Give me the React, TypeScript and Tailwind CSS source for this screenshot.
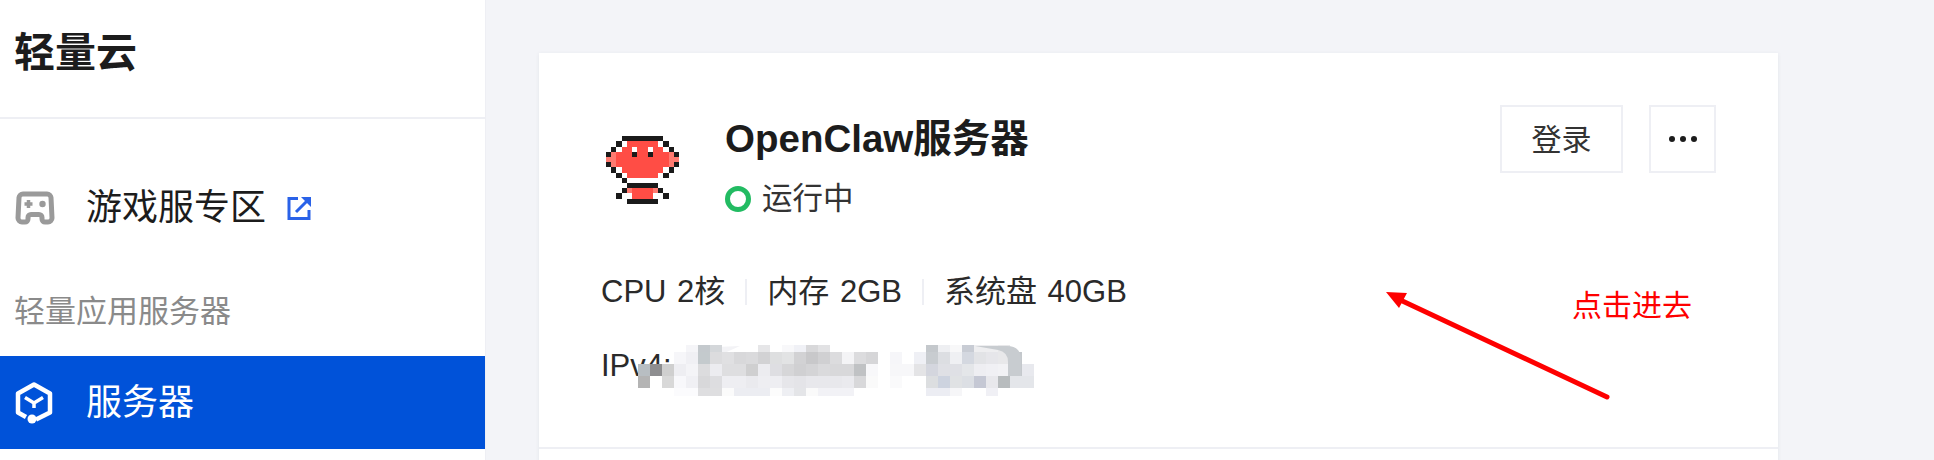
const LOGO = [
  "...kkkkkkkk...",
  "..kwrrrrrrwk..",
  ".kwrrwrrwrrwk.",
  "kprrrkrrkrrrpk",
  "pprrrrrrrrrrpp",
  "kprrrrrrrrrrpk",
  ".kwrrrrrrrrwk.",
  "..kwrrrrrrwk..",
  "...k..........",
  "....kkkkkk....",
  "...kprrrrpk...",
  "..k..rrrr..k..",
  "....kkkkkk....",
];

const LOGO_COLORS: Record<string, string> = {
  k: "#1a1a1a",
  r: "#ff4d45",
  p: "#ff7a70",
  w: "#ffffff",
};

// mosaic that hides the address: [column, colour], one list per row
const MOSAIC_ROWS: { y: number; h: number; cells: [number, string][] }[] = [
  {
    y: 345,
    h: 7,
    cells: [
      [4, "#f5f5f8"], [5, "#c4c9cd"], [6, "#d4d7da"], [10, "#e6e6e8"], [12, "#f8f8fa"],
      [13, "#f0f1f6"], [14, "#d8d8da"], [15, "#e2e2e4"], [24, "#c4c8cc"], [25, "#eeeff2"],
      [26, "#f8f8f9"], [27, "#c8ccd4"], [28, "#eeeef0"], [29, "#eeeef0"], [30, "#e8e8ea"],
    ],
  },
  {
    y: 352,
    h: 12,
    cells: [
      [3, "#f6f6f9"], [4, "#f0f0f4"], [5, "#c4cacd"], [6, "#dcdcde"], [7, "#e0e0e2"], [8, "#d8d8da"],
      [9, "#dadadc"], [10, "#d2d2d4"], [11, "#dedfe0"], [12, "#e2e3e4"], [13, "#d2d2d4"], [14, "#c8c8ca"],
      [15, "#d0d0d2"], [16, "#dcdcde"], [17, "#f4f4f6"], [18, "#dcdcde"], [19, "#d6d6d8"], [21, "#f6f6f9"],
      [23, "#eff0f5"], [24, "#c8ccd0"], [25, "#dcdee2"], [26, "#eff0f3"], [27, "#d4d8e0"], [28, "#e2e3e6"],
      [29, "#e6e6ea"], [30, "#e8e8ea"], [31, "#c4c8cc"],
    ],
  },
  {
    y: 364,
    h: 12,
    cells: [
      [0, "#b8bec2"], [1, "#8e8e90"], [2, "#cfcfcf"], [3, "#eeeef2"], [4, "#f4f4f7"], [5, "#dcdcde"],
      [6, "#ececf0"], [7, "#dedee0"], [8, "#dedee0"], [9, "#cfcfd0"], [10, "#ececf0"], [11, "#dedee2"],
      [12, "#d6d6d8"], [13, "#d0d0d2"], [14, "#d4d4d6"], [15, "#dadadc"], [16, "#d8d8da"], [17, "#d8d8da"],
      [18, "#c0c2c4"], [19, "#f8f8fa"], [21, "#f7f7f9"], [22, "#f7f7f9"], [23, "#e4e4e6"], [24, "#d4d6de"],
      [25, "#dfe0e5"], [26, "#dfe0e5"], [27, "#e4e6e9"], [28, "#eeeef2"], [29, "#f0f0f4"], [30, "#f2f2f5"],
      [31, "#c4c8cc"], [32, "#e8e9ee"],
    ],
  },
  {
    y: 376,
    h: 12,
    cells: [
      [0, "#b4b4b4"], [2, "#d8d8d8"], [3, "#f8f8fb"], [4, "#f0f0f4"], [5, "#d8d8da"], [6, "#dddde0"],
      [7, "#eeeef2"], [8, "#eeeef2"], [9, "#eaeaee"], [10, "#eeeef2"], [11, "#eeeef2"], [12, "#e6e6ea"],
      [13, "#e4e4e8"], [14, "#e8e8ec"], [15, "#e8e8ec"], [16, "#e8e8ec"], [17, "#eaeaee"], [18, "#d8d8da"],
      [19, "#fafafa"], [21, "#fafafb"], [24, "#dcdee0"], [25, "#cdd3df"], [26, "#e0e2e4"], [27, "#dcdfe4"],
      [28, "#c5c8d4"], [29, "#e8e8ec"], [30, "#b8bcbe"], [31, "#e4e6ea"], [32, "#e4e6ea"],
    ],
  },
  {
    y: 388,
    h: 8,
    cells: [
      [3, "#fbfbfd"], [4, "#fbfbfd"], [5, "#dedee0"], [6, "#dedee0"], [7, "#fbfbfb"], [8, "#ecedf2"],
      [9, "#ecedf2"], [10, "#ecedf2"], [11, "#fcfcfc"], [12, "#eeeff3"], [13, "#e4e5e8"], [14, "#fafafa"],
      [15, "#f2f2f6"], [16, "#f2f2f6"], [17, "#f2f2f6"], [24, "#ecedf3"], [25, "#ecedf3"], [26, "#f6f6f8"],
      [29, "#f0f0f5"],
    ],
  },
];

const PixelLogo = () => (
  <svg width="73" height="68" viewBox="0 0 14 13" shapeRendering="crispEdges" className="mt-[31px] shrink-0">
    {LOGO.map((row, y) =>
      row.split("").map((c, x) =>
        LOGO_COLORS[c] ? <rect key={`${x}-${y}`} x={x} y={y} width="1" height="1" fill={LOGO_COLORS[c]} /> : null,
      ),
    )}
  </svg>
);

const Mosaic = () => (
  <svg width="420" height="56" viewBox="638 345 420 56" className="absolute left-[99px] top-[292px]">
    <path d="M676 364 692 348 740 346 700 364Z" fill="#f3f3f6" />
    <g shapeRendering="crispEdges">
      {MOSAIC_ROWS.map((row) =>
        row.cells.map(([col, fill]) => (
          <rect key={`${row.y}-${col}`} x={638 + col * 12} y={row.y} width="12" height={row.h} fill={fill} />
        )),
      )}
    </g>
    <path d="M975 346h32q14 0 14 14v16h-13v-14q0-10-10-12z" fill="#c8ccd0" />
  </svg>
);

const GameIcon = () => (
  <svg width="40" height="34" viewBox="0 0 40 34" fill="none" className="shrink-0">
    <path
      d="M8 3H32a4 4 0 0 1 4 3.600L37 27a4 4 0 0 1-4 4H30a3 3 0 0 1-3-3v-1.500a3 3 0 0 0-3-3H16a3 3 0 0 0-3 3V28a3 3 0 0 1-3 3H7a4 4 0 0 1-4-4L4 6.600A4 4 0 0 1 8 3Z"
      stroke="#9a9a9a"
      strokeWidth="5"
    />
    <path d="M9.500 13h8M13.500 9v8" stroke="#9a9a9a" strokeWidth="3.500" />
    <circle cx="27.500" cy="13" r="3.200" fill="#9a9a9a" />
  </svg>
);

const ExternalIcon = () => (
  <svg width="25" height="25" viewBox="0 0 25 25" fill="none" className="ml-[21px] shrink-0">
    <path d="M11 2.500H2v20h20V14" stroke="#2a62e8" strokeWidth="3" />
    <path d="M9 16 20 5" stroke="#2a62e8" strokeWidth="3" />
    <path d="M14 1h10v10z" fill="#2a62e8" />
  </svg>
);

const ServerIcon = () => (
  <svg width="38" height="42" viewBox="0 0 38 42" fill="none" className="shrink-0">
    <path
      d="M11 35 3 30.500V11.500L19 2.500l16 9v19L21 37.500"
      stroke="#fff"
      strokeWidth="4.500"
      strokeLinejoin="round"
    />
    <path d="M10 15.500 19 21l9-5.500M19 21v5" stroke="#fff" strokeWidth="3.500" strokeLinejoin="round" />
    <circle cx="17" cy="37" r="4.500" fill="#fff" />
  </svg>
);

const Arrow = () => (
  <svg width="240" height="120" viewBox="0 0 240 120" fill="none" className="absolute left-[840px] top-[232px]">
    <path d="M228 112 17 13" stroke="#fe0000" strokeWidth="5" strokeLinecap="round" />
    <path d="M7 7 28 8 20 23Z" fill="#fe0000" />
  </svg>
);

const Divider = () => <span className="mx-[20px] h-[26px] w-[2px] bg-[#eeeff4]" />;

export default function App() {
  return (
    <div className="flex h-[460px] w-[1934px] overflow-hidden bg-[#f3f4f8] font-['Liberation_Sans','Noto_Sans_CJK_SC',sans-serif] text-[#1c1c1c]">
      <aside className="h-full w-[486px] shrink-0 border-r border-[#eeeff4] bg-white">
        <div className="flex h-[119px] items-center border-b-2 border-[#eeeff4] pb-[10px] pl-[14px] text-[41px] font-bold">
          轻量云
        </div>
        <div className="mt-[57px] flex h-[64px] items-center pl-[15px]">
          <GameIcon />
          <span className="ml-[31px] text-[36px]">游戏服专区</span>
          <ExternalIcon />
        </div>
        <div className="mt-[47px] flex h-[50px] items-center pl-[14px] text-[31px] text-[#8a8a8a]">轻量应用服务器</div>
        <div className="mt-[19px] flex h-[93px] items-center bg-[#0052d9] pl-[15px] text-white">
          <ServerIcon />
          <span className="ml-[33px] text-[36px]">服务器</span>
        </div>
      </aside>

      <main className="pl-[53px] pt-[53px]">
        <div className="relative h-[420px] w-[1239px] bg-white shadow-[0_1px_4px_rgba(54,58,80,0.08)]">
          <div className="flex justify-between pl-[67px] pr-[62px] pt-[52px]">
            <div className="flex">
              <PixelLogo />
              <div className="ml-[46px] mt-[10px]">
                <div className="flex h-[48px] items-center text-[38.500px] font-semibold">OpenClaw服务器</div>
                <div className="mt-[16px] flex h-[40px] items-center">
                  <span className="size-[26px] rounded-full border-[5px] border-[#22bb62]" />
                  <span className="ml-[11px] text-[30.500px] text-[#333]">运行中</span>
                </div>
              </div>
            </div>
            <div className="flex gap-[26px]">
              <button className="flex h-[68px] w-[123px] items-center justify-center border-2 border-[#eeeff4] text-[30px] text-[#333]">
                登录
              </button>
              <button className="flex h-[68px] w-[67px] items-center justify-center gap-[5px] border-2 border-[#eeeff4]">
                <span className="size-[6px] rounded-full bg-[#1c1c1c]" />
                <span className="size-[6px] rounded-full bg-[#1c1c1c]" />
                <span className="size-[6px] rounded-full bg-[#1c1c1c]" />
              </button>
            </div>
          </div>

          <div className="mt-[53px] flex h-[40px] items-center pl-[62px] text-[31px] text-[#2a2a2a] [word-spacing:2px]">
            <span>CPU 2核</span>
            <Divider />
            <span>内存 2GB</span>
            <Divider />
            <span>系统盘 40GB</span>
          </div>
          <div className="mt-[34px] flex h-[40px] items-center pl-[62px] text-[31px] text-[#2a2a2a]">IPv4:</div>

          <Mosaic />
          <Arrow />
          <span className="absolute left-[1033px] top-[235px] text-[30px] leading-[36px] text-[#fe0000]">点击进去</span>

          <div className="absolute inset-x-0 top-[394px] h-[2px] bg-[#eeeff4]" />
        </div>
      </main>
    </div>
  );
}
